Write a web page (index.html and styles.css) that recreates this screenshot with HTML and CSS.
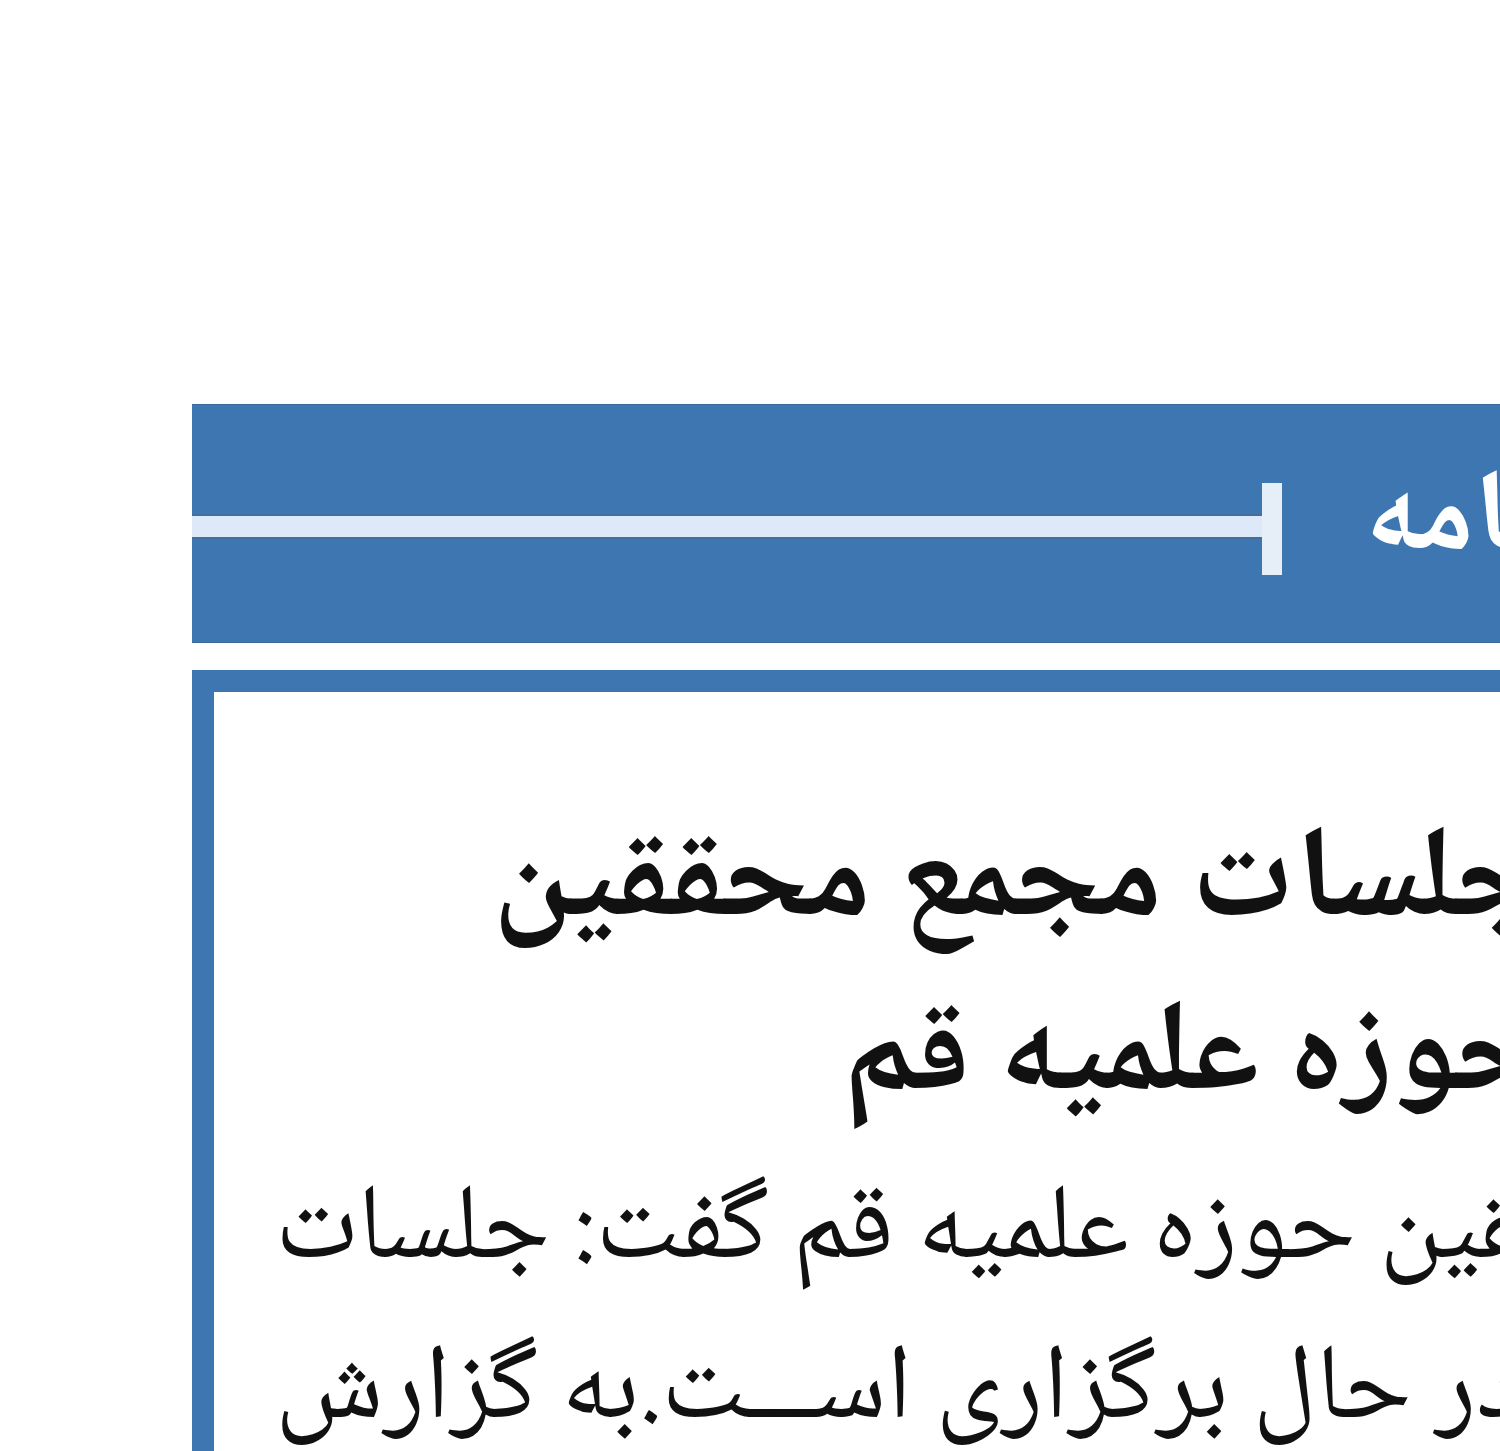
FILE: index.html
```html
<!DOCTYPE html>
<html lang="fa">
<head>
    <meta charset="UTF-8">
    <title>خبرنامه</title>
    <link rel="stylesheet" href="styles.css">
</head>
<body>
    <div class="page">
        <div class="panel">
            <div class="panel-head">
                <span class="rule"></span>
                <span class="divider"></span>
                <span class="panel-title">خبرنامه</span>
            </div>

            <div class="news">
                <h1 class="news-title">جلسات مجمع محققین<br>حوزه علمیه قم</h1>
                <p class="news-text">دبیر مجمع محققین حوزه علمیه قم گفت: جلسات<br>این مجمع در حال برگزاری اســـت.به گزارش</p>
            </div>
        </div>
    </div>
</body>
</html>
```

FILE: styles.css
```css
html, body {
    margin: 0;
    padding: 0;
    overflow: hidden;
    background: #ffffff;
}

body {
    font-family: "Noto Naskh Arabic", "FreeSerif", serif;
    color: #111;
}

.page {
    padding: 404px 0 0 192px;
}

.panel {
    width: 2100px;
}

.panel-head {
    display: grid;
    grid-template-columns: 1070px 20px auto;
    align-items: center;
    height: 239px;
    background: #3d76b1;
    border-top: 1px solid #3a6a9c;
    border-bottom: 1px solid #3a6a9c;
    box-sizing: border-box;
    margin-bottom: 27px;
}

.rule {
    height: 21px;
    margin-top: 6px;
    background: #dde9f8;
    border-top: 2px solid #41709f;
    border-bottom: 2px solid #41709f;
}

.divider {
    height: 92px;
    margin-top: 10px;
    background: #e6eef8;
}

.panel-title {
    justify-self: start;
    direction: rtl;
    white-space: nowrap;
    color: #ffffff;
    font-weight: bold;
    font-size: 116px;
    line-height: 1;
    margin-left: 83px;
}

.news {
    direction: rtl;
    background: #ffffff;
    border: 22px solid #3d76b1;
    border-bottom: none;
    padding: 108px 0 40px 61px;
    min-height: 900px;
}

.news-title {
    margin: 0 730px 0 0;
    font-size: 130px;
    line-height: 174px;
    font-weight: bold;
    text-align: right;
    white-space: nowrap;
}

.news-text {
    margin: 6px 0 0;
    font-size: 107px;
    line-height: 160px;
    text-align: left;
    white-space: nowrap;
}
```
